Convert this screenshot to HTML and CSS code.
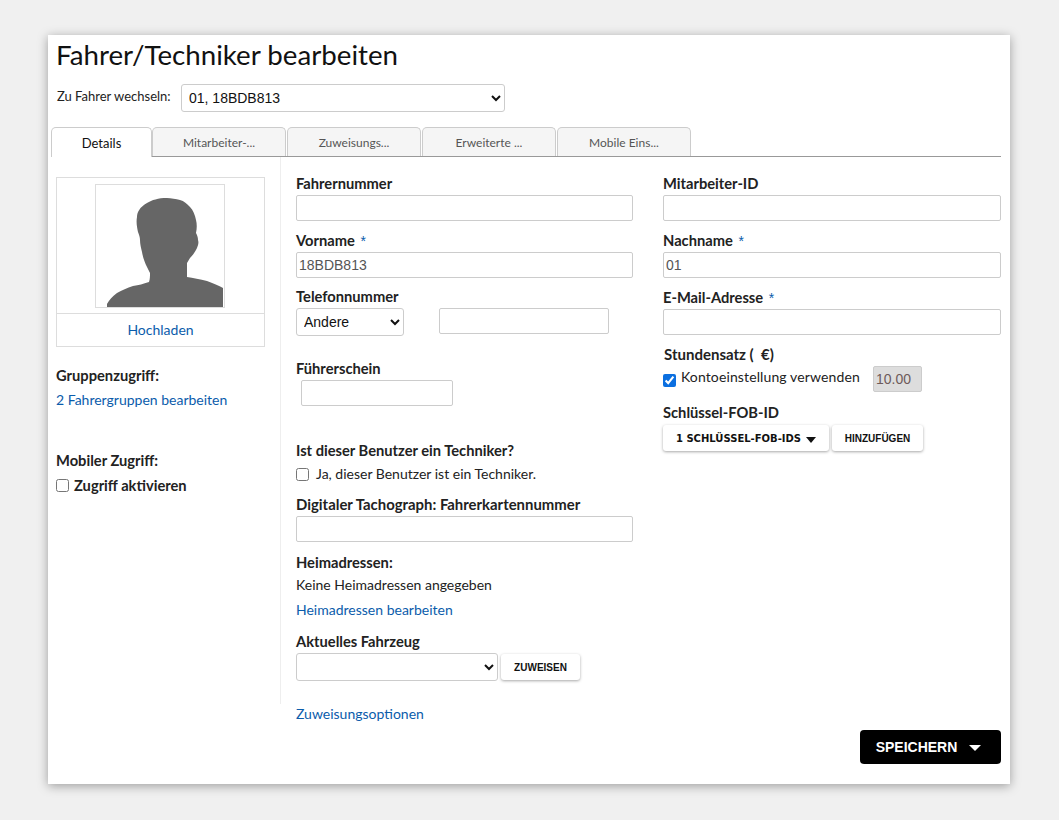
FILE: index.html
```html
<!DOCTYPE html>
<html lang="de">
<head>
    <meta charset="UTF-8">
    <title>Fahrer/Techniker bearbeiten</title>
    <link rel="stylesheet" href="styles.css">
</head>
<body>
    <div class="panel">
        <h1 class="title">Fahrer/Techniker bearbeiten</h1>
        <div class="switch">
            <label class="switch-label">Zu Fahrer wechseln:</label>
            <select class="switch-select"><option>01, 18BDB813</option></select>
        </div>
        <ul class="tabs">
            <li class="tab active">Details</li>
            <li class="tab">Mitarbeiter-...</li>
            <li class="tab">Zuweisungs...</li>
            <li class="tab">Erweiterte ...</li>
            <li class="tab">Mobile Eins...</li>
        </ul>
        <div class="content">
            <!-- linke Spalte -->
            <div class="side">
                <div class="photo">
                    <div class="photo-img">
                        <div class="photo-frame">
                            <svg width="128" height="122" viewBox="0 0 128 122">
                                <path fill="#666" d="M71 13C62 13 56 15 51 18C44 22 41 27 41 32C40 37 41 42 42 47C43 50 44 52 44 55C44 59 45 63 46 67C47 73 49 78 51 82L54 88C54 91 54 94 53 97C47 99 43 100 37 101C31 103 26 105 21 108C16 112 13 115 11 119V122H127V103C123 101 117 98 111 96C104 94 97 93 91 92C91 87 91 83 91 78L94 73C97 70 99 67 101 63C102 60 103 58 102 55C102 52 101 50 100 48C101 43 101 39 100 35C99 30 97 25 94 22C91 19 88 16 84 15C80 14 75 13 71 13Z"/>
                            </svg>
                        </div>
                    </div>
                    <a class="photo-link link">Hochladen</a>
                </div>
                <div class="side-title group-title">Gruppenzugriff:</div>
                <a class="link group-link">2 Fahrergruppen bearbeiten</a>
                <div class="side-title mobile-title">Mobiler Zugriff:</div>
                <label class="mobile-check"><input type="checkbox" class="check">Zugriff aktivieren</label>
            </div>

            <!-- mittlere Spalte -->
            <div class="col">
                <div class="field">
                    <label>Fahrernummer</label>
                    <input type="text" class="txt">
                </div>
                <div class="field short">
                    <label>Vorname <span class="req">*</span></label>
                    <input type="text" class="txt" value="18BDB813">
                </div>
                <div class="field">
                    <label>Telefonnummer</label>
                    <div class="phone">
                        <select class="phone-type"><option>Andere</option></select>
                        <input type="text" class="txt phone-num">
                    </div>
                </div>
                <div class="field licence">
                    <label>Führerschein</label>
                    <input type="text" class="txt licence-input">
                </div>
                <div class="field tech">
                    <label>Ist dieser Benutzer ein Techniker?</label>
                    <label class="plain"><input type="checkbox" class="check check-wide">Ja, dieser Benutzer ist ein Techniker.</label>
                </div>
                <div class="field tacho">
                    <label>Digitaler Tachograph: Fahrerkartennummer</label>
                    <input type="text" class="txt">
                </div>
                <div class="field home">
                    <label>Heimadressen:</label>
                    <p class="home-text">Keine Heimadressen angegeben</p>
                    <a class="link home-link">Heimadressen bearbeiten</a>
                </div>
                <div class="field vehicle">
                    <label>Aktuelles Fahrzeug</label>
                    <div class="vehicle-row">
                        <select class="vehicle-select"><option></option></select>
                        <button class="btn btn-assign">ZUWEISEN</button>
                    </div>
                </div>
            </div>

            <!-- rechte Spalte -->
            <div class="col col-right">
                <div class="field">
                    <label>Mitarbeiter-ID</label>
                    <input type="text" class="txt">
                </div>
                <div class="field">
                    <label>Nachname <span class="req">*</span></label>
                    <input type="text" class="txt" value="01">
                </div>
                <div class="field">
                    <label>E-Mail-Adresse <span class="req">*</span></label>
                    <input type="text" class="txt">
                </div>
                <div class="rate">
                    <label class="rate-title">Stundensatz (&nbsp; €)</label>
                    <div class="rate-row">
                        <input type="checkbox" class="check check-blue" checked>
                        <span class="rate-text">Kontoeinstellung verwenden</span>
                        <input type="text" class="txt rate-input" value="10.00" disabled>
                    </div>
                </div>
                <div class="field fob">
                    <label>Schlüssel-FOB-ID</label>
                    <div class="fob-row">
                        <button class="btn btn-fob">1 SCHLÜSSEL-FOB-IDS<i class="caret"></i></button>
                        <button class="btn btn-add">HINZUFÜGEN</button>
                    </div>
                </div>
            </div>
        </div>
        <div class="bottom">
            <a class="link assign-link">Zuweisungsoptionen</a>
            <button class="btn-save">SPEICHERN<i class="caret caret-white"></i></button>
        </div>
    </div>
</body>
</html>
```

FILE: styles.css
```css
*{
    box-sizing: border-box;
}

body{
    margin: 0;
    height: 820px;
    padding: 35px 49px 0 48px;
    background: #f0f0f0;
    font: 14px "Lato", "Noto Sans", sans-serif;
    color: #222;
}

.panel{
    height: 749px;
    background: #fff;
    padding: 0 9px 0 8px;
    box-shadow: 0 2px 10px rgba(0,0,0,.35);
}

.title{
    margin: 0;
    height: 49px;
    padding-top: 3px;
    font-size: 27.7px;
    font-weight: 400;
    line-height: 33px;
    color: #111;
}

.switch{
    display: flex;
    align-items: center;
    height: 28px;
    padding-left: 1px;
}

.switch-label{
    width: 124px;
    font-size: 13px;
    margin-top: -4px;
}

select{
    height: 28px;
    border: 1px solid #ccc;
    border-radius: 3px;
    background: #fff;
    color: #111;
    font: 14px "Liberation Sans", sans-serif;
    padding-left: 3px;
}

.switch-select{
    width: 324px;
}

.tabs{
    list-style: none;
    margin: 15px 0 0 -5px;
    padding: 0;
    height: 30px;
    display: flex;
    gap: 1px;
    border-bottom: 1px solid #999;
}

.tab{
    width: 134px;
    height: 29px;
    background: #f5f5f5;
    border: 1px solid #ccc;
    border-bottom: none;
    border-radius: 5px 5px 0 0;
    text-align: center;
    line-height: 30px;
    font-size: 12px;
    color: #555;
}

.tab.active{
    width: 101px;
    height: 30px;
    margin-right: -1px;
    background: #fff;
    font-size: 13px;
    color: #111;
}

.content{
    display: flex;
    height: 547px;
}

.side{
    width: 225px;
    padding: 20px 16px 0 0;
    border-right: 1px solid #eee;
}

.photo{
    width: 209px;
    height: 170px;
    border: 1px solid #ddd;
}

.photo-img{
    height: 136px;
    padding-top: 6px;
    border-bottom: 1px solid #ddd;
}

.photo-frame{
    width: 130px;
    height: 124px;
    margin-left: 38px;
    border: 1px solid #ddd;
    overflow: hidden;
}

.photo-frame svg{
    display: block;
}

.photo-link{
    display: block;
    text-align: center;
    line-height: 31px;
}

.link{
    color: #0b5cab;
    font-size: 14px;
}

.side-title{
    font-weight: 700;
    font-size: 14.7px;
    line-height: 17px;
}

.group-title{
    margin-top: 20px;
}

.group-link{
    display: block;
    margin-top: 7px;
    line-height: 18px;
}

.mobile-title{
    margin-top: 43px;
}

.mobile-check{
    display: flex;
    align-items: center;
    margin-top: 7px;
    font-weight: 700;
    font-size: 14.7px;
    line-height: 18px;
}

.check{
    width: 13px;
    height: 13px;
    margin: 0 5px 0 0;
}

.check-wide{
    margin-right: 7px;
}

.col{
    width: 337px;
    margin-left: 15px;
    padding-top: 18px;
}

.col-right{
    width: 338px;
    margin-left: 30px;
}

.field{
    height: 57px;
}

.field.short{
    height: 56px;
}

.field label{
    display: block;
    font-weight: 700;
    font-size: 14.7px;
    line-height: 17px;
    margin-bottom: 3px;
}

.req{
    color: #0b5cab;
    font: 400 14px "Liberation Sans", sans-serif;
    margin-left: 2px;
}

.txt{
    display: block;
    width: 100%;
    height: 26px;
    border: 1px solid #ccc;
    border-radius: 2px;
    padding: 0 2px;
    font: 14px "Liberation Sans", sans-serif;
    color: #555;
}

.field label.plain{
    display: flex;
    align-items: center;
    font-weight: 400;
    font-size: 14px;
    line-height: 18px;
    margin: 6px 0 0;
}

.phone{
    display: flex;
}

.phone-type{
    width: 108px;
}

.phone-num{
    width: 170px;
    margin-left: 35px;
}

.licence{
    margin-top: 15px;
    height: 72px;
}

.licence-input{
    width: 152px;
    margin-left: 5px;
}

.tech{
    margin-top: 10px;
    height: 54px;
}

.tacho{
    height: 58px;
}

.field.tacho label{
    font-size: 14.9px;
}

.home{
    height: 79px;
}

.home-text{
    margin: 5px 0 0;
    line-height: 18px;
}

.home-link{
    display: block;
    margin-top: 7px;
    line-height: 18px;
}

.vehicle-row{
    display: flex;
    align-items: center;
}

.vehicle-select{
    width: 202px;
}

.btn{
    height: 26px;
    background: #fff;
    border: none;
    border-radius: 3px;
    box-shadow: 0 1px 3px rgba(0,0,0,.35);
    font: 700 10px "Liberation Sans", sans-serif;
    color: #111;
    padding: 0;
}

.btn-assign{
    width: 79px;
    margin-left: 3px;
}

.rate{
    height: 58px;
}

.rate-title{
    display: block;
    font-weight: 700;
    font-size: 15px;
    line-height: 17px;
    margin-left: 1px;
    margin-bottom: 3px;
}

.rate-row{
    display: flex;
    align-items: center;
    height: 26px;
}

.check-blue{
    accent-color: #0b6fe0;
    margin-top: 2px;
}

.rate-text{
    width: 192px;
    margin-top: -6px;
    letter-spacing: .12px;
}

.rate-input{
    width: 49px;
    background: #ddd;
    color: #6d5a5a;
}

.field.fob label{
    margin-bottom: 4px;
}

.fob-row{
    display: flex;
    gap: 3px;
}

.btn-fob{
    width: 166px;
    font-family: "DejaVu Sans", sans-serif;
    font-size: 10px;
}

.btn-add{
    width: 91px;
}

.caret{
    display: inline-block;
    width: 0;
    height: 0;
    margin-left: 5px;
    border-left: 5px solid transparent;
    border-right: 5px solid transparent;
    border-top: 6px solid #111;
    vertical-align: -1px;
}

.bottom{
    position: relative;
    padding-left: 240px;
    margin-top: 1px;
}

.assign-link{
    line-height: 18px;
}

.btn-save{
    position: absolute;
    right: 0;
    top: 25px;
    width: 141px;
    height: 34px;
    background: #000;
    border: none;
    border-radius: 4px;
    color: #fff;
    font: 700 14px "Liberation Sans", sans-serif;
    padding: 0 4px 0 0;
}

.caret-white{
    margin-left: 12px;
    border-left-width: 6px;
    border-right-width: 6px;
    border-top-color: #fff;
    vertical-align: 1px;
}
```
